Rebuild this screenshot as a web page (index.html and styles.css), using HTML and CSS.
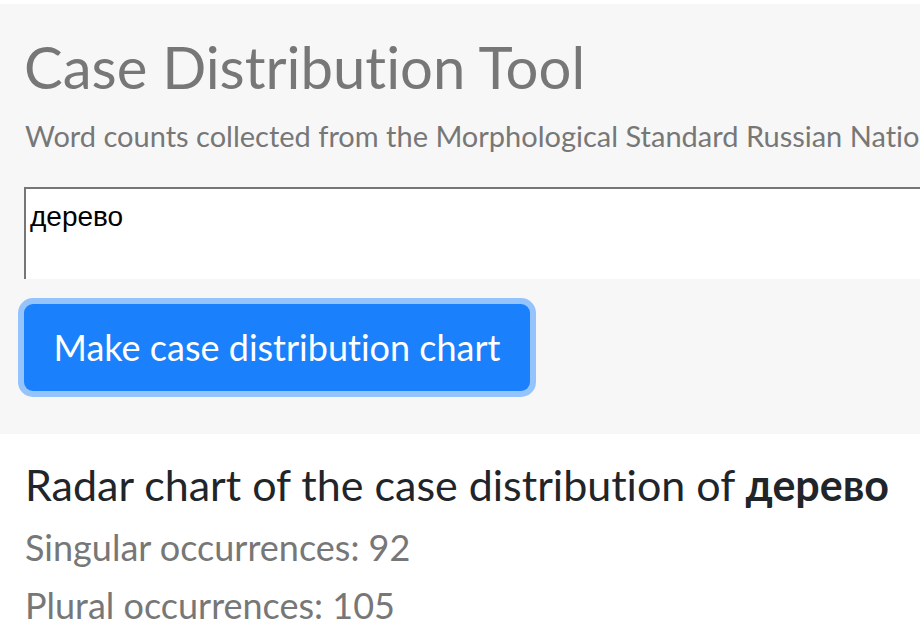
FILE: index.html
```html
<!DOCTYPE html>
<html lang="en">
<head>
<meta charset="utf-8">
<title>Case Distribution Tool</title>
<link rel="stylesheet" href="styles.css">
</head>
<body>
<div class="page">
  <header class="jumbotron">
    <h1 class="title">Case Distribution Tool</h1>
    <p class="lead">Word counts collected from the Morphological Standard Russian National Corpus</p>
    <textarea class="word-input">дерево</textarea>
    <button class="btn-primary" type="button">Make case distribution chart</button>
  </header>
  <section class="results">
    <h2 class="chart-title">Radar chart of the case distribution of <strong>дерево</strong></h2>
    <p class="count count-first">Singular occurrences: 92</p>
    <p class="count">Plural occurrences: 105</p>
  </section>
</div>
</body>
</html>
```
FILE: styles.css
```css
html, body {
  margin: 0;
  padding: 0;
  background: #ffffff;
  overflow: hidden;
}
body {
  font-family: Lato, "Noto Sans", sans-serif;
  font-variant-ligatures: none;
  padding-top: 4px;
}
.page {
  width: 920px;
  overflow: hidden;
}
.jumbotron {
  background: #f7f7f7;
  padding: 27px 0 43px 24px;
  display: flex;
  flex-direction: column;
  align-items: flex-start;
  white-space: nowrap;
}
.title {
  margin: 0;
  font-size: 58px;
  line-height: 72px;
  font-weight: 400;
  color: #777777;
}
.lead {
  margin: 13px 0 0 1px;
  font-size: 29px;
  line-height: 40px;
  color: #777777;
}
.word-input {
  margin: 31px 0 0 0;
  width: 1000px;
  height: 92px;
  box-sizing: border-box;
  border: none;
  border-top: 2px solid #767676;
  border-left: 2px solid #767676;
  background: #ffffff;
  padding: 12px 4px 0 4px;
  font-family: "Liberation Sans", Arial, sans-serif;
  font-size: 28px;
  color: #000000;
  resize: none;
  overflow: hidden;
  outline: none;
}
.btn-primary {
  margin-top: 25px;
  width: 506px;
  height: 87px;
  display: flex;
  align-items: center;
  justify-content: center;
  background: #1a80fb;
  color: #ffffff;
  border: none;
  border-radius: 9px;
  box-shadow: 0 0 0 6px #94c4fb;
  font-family: Lato, sans-serif;
  font-variant-ligatures: none;
  font-size: 36px;
  line-height: 44px;
  padding: 0 0 2px 0;
  cursor: pointer;
}
.results {
  padding: 25px 24px 0 25px;
  white-space: nowrap;
}
.chart-title {
  margin: 0;
  font-size: 43px;
  line-height: 52px;
  font-weight: 400;
  color: #212529;
}
.chart-title strong {
  font-weight: 700;
}
.count {
  margin: 0;
  font-size: 36px;
  line-height: 58px;
  color: #777777;
}
.count-first {
  margin-top: 7px;
}
```
